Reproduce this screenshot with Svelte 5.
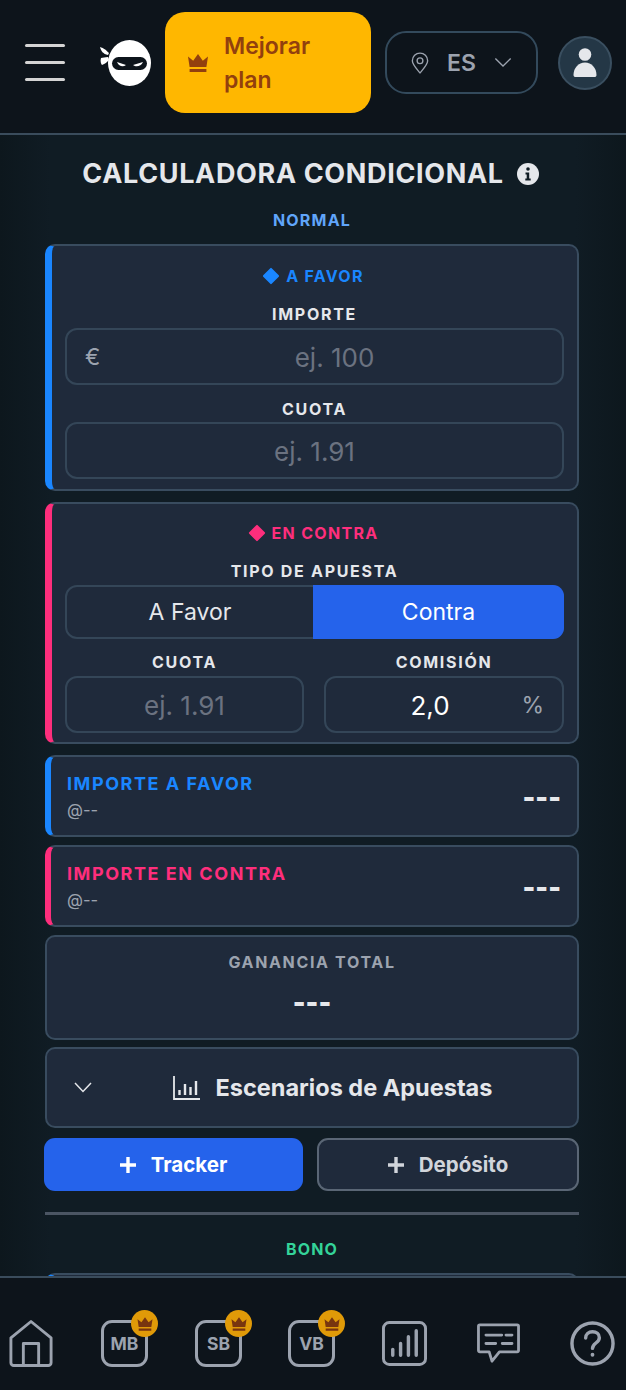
<script>
    const badges = ["MB", "SB", "VB"];
</script>

{#snippet crown(size)}
    <svg width={size} height={size} viewBox="0 0 24 24" fill="currentColor">
        <path d="M2 5.5l5.2 4.2L12 3l4.8 6.7L22 5.5 20.4 16H3.6z" />
        <rect x="3.6" y="18" width="16.8" height="3" />
    </svg>
{/snippet}

<div class="page">
    <!-- Header -->
    <header class="topbar">
        <button class="burger" aria-label="Menu">
            <span></span>
            <span></span>
            <span></span>
        </button>

        <svg class="logo" width="52" height="48" viewBox="0 0 52 48">
            <path d="M9 13C5 9 3 8 0 7c1 4 3 7 8 8z" fill="#fff" />
            <path d="M8 17c-3 0-5 1-7 1-1 3 0 6 1 7 3-1 5-3 7-5z" fill="#fff" />
            <ellipse cx="29.500" cy="23" rx="21.500" ry="23" fill="#fff" />
            <rect x="12" y="17" width="35" height="13" rx="6.500" fill="#0d141b" />
            <path d="M17 22l9 3c-3 2.500-7 1.500-9-3zM43 22l-10 3c3 2.500 8 1.500 10-3z" fill="#fff" />
        </svg>

        <button class="upgrade">
            <span class="upgrade-crown">{@render crown(24)}</span>
            <span>Mejorar<br />plan</span>
        </button>

        <button class="lang">
            <svg width="18" height="22" viewBox="0 0 20 24" fill="none" stroke="#9ca3af" stroke-width="1.500">
                <path d="M10 23C5 17 1.500 13.500 1.500 9.500a8.500 8.500 0 0 1 17 0C18.500 13.500 15 17 10 23z" />
                <circle cx="10" cy="9.500" r="3.200" />
            </svg>
            <span>ES</span>
            <svg width="18" height="11" viewBox="0 0 20 12" fill="none" stroke="#9ca3af" stroke-width="1.500">
                <path d="M1.500 1.500L10 10l8.500-8.500" />
            </svg>
        </button>

        <div class="avatar">
            <svg width="24" height="30" viewBox="0 0 24 30" fill="#e5e7eb">
                <circle cx="12" cy="6.500" r="6.300" />
                <path d="M.5 27c0-7 5-12.500 11.500-12.500S23.500 20 23.500 27c0 1.500-1 2-2 2h-19c-1 0-2-.5-2-2z" />
            </svg>
        </div>
    </header>

    <main class="content">
        <div class="title-row">
            <h1>CALCULADORA CONDICIONAL</h1>
            <svg width="22" height="22" viewBox="0 0 22 22">
                <circle cx="11" cy="11" r="11" fill="#e5e7eb" />
                <circle cx="11" cy="6" r="1.800" fill="#101c24" />
                <path d="M8.500 9.500h3.700v6h1.500v2H8.300v-2h1.400v-4H8.500z" fill="#101c24" />
            </svg>
        </div>
        <div class="mode mode-normal">NORMAL</div>

        <!-- A favor -->
        <section class="card accent-blue bet-one">
            <div class="bet-head blue"><i class="diamond"></i>A FAVOR</div>
            <div class="label">IMPORTE</div>
            <div class="field">
                <span class="prefix">€</span>
                <input placeholder="ej. 100" />
            </div>
            <div class="label second">CUOTA</div>
            <div class="field">
                <input placeholder="ej. 1.91" />
            </div>
        </section>

        <!-- En contra -->
        <section class="card accent-pink bet-two">
            <div class="bet-head pink"><i class="diamond"></i>EN CONTRA</div>
            <div class="label">TIPO DE APUESTA</div>
            <div class="toggle">
                <button>A Favor</button>
                <button class="active">Contra</button>
            </div>
            <div class="two-cols">
                <div>
                    <div class="label">CUOTA</div>
                    <div class="field">
                        <input placeholder="ej. 1.91" />
                    </div>
                </div>
                <div>
                    <div class="label">COMISIÓN</div>
                    <div class="field">
                        <input class="filled" value="2,0" />
                        <span class="suffix">%</span>
                    </div>
                </div>
            </div>
        </section>

        <!-- Resultados -->
        <section class="card result accent-blue thin">
            <div class="result-text">
                <div class="result-name blue">IMPORTE A FAVOR</div>
                <div class="result-odds">@--</div>
            </div>
            <div class="dashes">---</div>
        </section>
        <section class="card result accent-pink thin">
            <div class="result-text">
                <div class="result-name pink">IMPORTE EN CONTRA</div>
                <div class="result-odds">@--</div>
            </div>
            <div class="dashes">---</div>
        </section>
        <section class="card total">
            <div class="total-name">GANANCIA TOTAL</div>
            <div class="dashes">---</div>
        </section>

        <section class="card scenarios">
            <svg class="scenarios-chevron" width="18" height="11" viewBox="0 0 18 11" fill="none" stroke="#e5e7eb" stroke-width="1.500">
                <path d="M1 1l8 8.500L17 1" />
            </svg>
            <div class="scenarios-title">
                <svg width="27" height="24" viewBox="0 0 27 24" fill="none" stroke="#e5e7eb" stroke-width="1.800">
                    <path d="M1 0v23h26" />
                    <path d="M6.500 14v5M12 8v11M17.500 11v8M23 5v14" stroke-width="2.400" />
                </svg>
                <span>Escenarios de Apuestas</span>
            </div>
        </section>

        <div class="actions">
            <button class="primary">
                <svg width="16" height="16" viewBox="0 0 16 16" fill="currentColor"><path d="M6.300 0h3.400v6.300H16v3.400H9.700V16H6.300V9.700H0V6.300h6.300z" /></svg>
                Tracker
            </button>
            <button class="secondary">
                <svg width="16" height="16" viewBox="0 0 16 16" fill="currentColor"><path d="M6.300 0h3.400v6.300H16v3.400H9.700V16H6.300V9.700H0V6.300h6.300z" /></svg>
                Depósito
            </button>
        </div>

        <hr />
        <div class="mode mode-bono">BONO</div>
        <section class="card accent-blue bet-one"></section>
    </main>

    <!-- Bottom nav -->
    <nav class="bottom">
        <svg class="home" width="44" height="49" viewBox="0 0 46 50" fill="none" stroke="#9ca3af" stroke-width="3" stroke-linejoin="round">
            <path d="M2 19L23 2l21 17v26a3 3 0 0 1-3 3H5a3 3 0 0 1-3-3z" />
            <path d="M15 48V25h16v23" />
        </svg>

        {#each badges as badge}
            <div class="square">
                <span>{badge}</span>
                <div class="badge">{@render crown(18)}</div>
            </div>
        {/each}

        <svg width="45" height="45" viewBox="0 0 46 46" fill="none" stroke="#9ca3af" stroke-linecap="round">
            <rect x="1.500" y="1.500" width="43" height="43" rx="6" stroke-width="3" />
            <path d="M11 29v6M19 23v12M27 16v19M35 10v25" stroke-width="3.500" />
        </svg>

        <svg class="shifted" width="45" height="41" viewBox="0 0 46 44" fill="none" stroke="#9ca3af" stroke-width="3" stroke-linejoin="round">
            <path d="M3 2h40a1.500 1.500 0 0 1 1.500 1.500v26a1.500 1.500 0 0 1-1.500 1.500H24l-8 10-3-10H3a1.500 1.500 0 0 1-1.500-1.500v-26A1.500 1.500 0 0 1 3 2z" />
            <path d="M9.500 13h17M31 13h6.500M9.500 22h10.500M27 22h10.500" stroke-linecap="round" />
        </svg>

        <svg class="shifted" width="45" height="45" viewBox="0 0 46 46" fill="none" stroke="#9ca3af" stroke-width="3.500">
            <circle cx="23" cy="23" r="21" />
            <path d="M16 17.500c0-4 3-6.500 7-6.500s7 2.500 7 6c0 5.500-7 5.500-7 11" stroke-linecap="round" />
            <circle cx="23" cy="34.500" r="1.200" fill="#9ca3af" stroke-width="1.500" />
        </svg>
    </nav>
</div>

<style>
    :global(body) {
        margin: 0;
        background: #101c24;
    }

    .page {
        height: 1390px;
        display: flex;
        flex-direction: column;
        overflow: hidden;
        font-family: Inter, "Liberation Sans", sans-serif;
        color: #e5e7eb;
    }

    button {
        font-family: inherit;
        cursor: pointer;
    }

    /* Header */
    .topbar {
        height: 133px;
        flex: none;
        display: flex;
        align-items: center;
        box-sizing: content-box;
        background: #0d141b;
        border-bottom: 2px solid #3a4c5c;
    }
    .burger {
        width: 40px;
        height: 37px;
        margin-left: 25px;
        margin-top: -8px;
        padding: 0;
        display: flex;
        flex-direction: column;
        justify-content: space-between;
        background: none;
        border: 0;
    }
    .burger span {
        height: 3px;
        border-radius: 2px;
        background: #d4d4d4;
    }
    .logo {
        margin-left: 35px;
        margin-right: 13px;
        margin-top: -5px;
        flex: none;
    }
    .upgrade {
        width: 206px;
        height: 101px;
        margin-top: -8px;
        padding: 0 0 0 21px;
        display: flex;
        align-items: center;
        gap: 14px;
        flex: none;
        text-align: left;
        font-size: 23px;
        line-height: 34px;
        font-weight: 600;
        color: #92400e;
        background: #ffb700;
        border: 0;
        border-radius: 20px;
    }
    .upgrade-crown {
        display: flex;
    }
    .lang {
        width: 153px;
        height: 63px;
        margin-left: 14px;
        margin-top: -8px;
        padding: 0 24px;
        display: flex;
        align-items: center;
        justify-content: space-between;
        flex: none;
        font-size: 23px;
        font-weight: 600;
        color: #9ca3af;
        background: none;
        border: 2px solid #334a5c;
        border-radius: 21px;
    }
    .avatar {
        width: 54px;
        height: 54px;
        margin-left: 20px;
        margin-top: -8px;
        box-sizing: border-box;
        display: flex;
        align-items: center;
        justify-content: center;
        flex: none;
        background: #243746;
        border: 2px solid #3a4f60;
        border-radius: 50%;
    }

    /* Content */
    .content {
        flex: 1;
        min-height: 0;
        overflow: hidden;
        padding: 0 47px 0 45px;
        background: linear-gradient(90deg, #0d171d 0, #101c24 8%, #101c24 92%, #0d171d 100%);
    }
    .title-row {
        height: 75px;
        display: flex;
        align-items: center;
        justify-content: center;
        gap: 13px;
        padding: 2px 3px 0 0;
        box-sizing: border-box;
    }
    h1 {
        margin: 0;
        font-size: 27px;
        font-weight: 700;
        letter-spacing: 0.65px;
        white-space: nowrap;
    }
    .mode {
        text-align: center;
        font-size: 16px;
        line-height: 20px;
        font-weight: 700;
        letter-spacing: 1.2px;
        margin-bottom: 14px;
    }
    .mode-normal {
        color: #60a5fa;
    }
    .mode-bono {
        color: #34d399;
    }

    .card {
        box-sizing: border-box;
        background: #1f2a3b;
        border: 2px solid #394c5f;
        border-radius: 10px;
        margin-bottom: 11px;
    }
    .accent-blue {
        border-left: 7px solid #1a86ff;
    }
    .accent-pink {
        border-left: 7px solid #fe2e7c;
    }
    .thin {
        border-left-width: 6px;
    }
    .bet-one,
    .bet-two {
        padding: 0 13px;
    }
    .bet-one {
        height: 247px;
    }
    .bet-two {
        height: 242px;
    }
    .bet-head {
        height: 20px;
        margin-top: 20px;
        display: flex;
        align-items: center;
        justify-content: center;
        gap: 9px;
        font-size: 16px;
        font-weight: 700;
        letter-spacing: 1.3px;
    }
    .bet-two .bet-head {
        margin-top: 19px;
    }
    .blue {
        color: #1a86ff;
    }
    .pink {
        color: #fe2e7c;
    }
    .diamond {
        width: 12px;
        height: 12px;
        background: currentColor;
        transform: rotate(45deg);
        border-radius: 1px;
    }
    .label {
        margin-top: 18px;
        height: 20px;
        line-height: 20px;
        margin-bottom: 4px;
        text-align: center;
        font-size: 16px;
        font-weight: 700;
        letter-spacing: 1.7px;
        color: #e5e7eb;
    }
    .label.second {
        margin-top: 14px;
        margin-bottom: 3px;
    }
    .field {
        height: 57px;
        box-sizing: border-box;
        display: flex;
        align-items: center;
        position: relative;
        border: 2px solid #344658;
        border-radius: 12px;
    }
    .field input {
        flex: 1;
        width: 100%;
        min-width: 0;
        height: 100%;
        padding: 2px 0 0;
        box-sizing: border-box;
        text-align: center;
        font-family: inherit;
        font-size: 26px;
        color: #fff;
        background: none;
        border: 0;
        outline: 0;
    }
    .field input::placeholder {
        color: #6b7280;
        opacity: 1;
    }
    .prefix {
        width: 40px;
        flex: none;
        padding-left: 18px;
        box-sizing: border-box;
        font-size: 23px;
        color: #9ca3af;
    }
    .suffix {
        position: absolute;
        right: 18px;
        font-size: 23px;
        color: #9ca3af;
    }
    .field input.filled {
        padding-right: 28px;
    }

    .toggle {
        height: 54px;
        display: flex;
        box-sizing: border-box;
        border: 2px solid #344658;
        border-radius: 12px;
    }
    .toggle button {
        width: 246px;
        flex: none;
        margin: 0;
        padding: 0;
        font-size: 23px;
        color: #e5e7eb;
        background: none;
        border: 0;
    }
    .toggle .active {
        flex: 1;
        width: auto;
        margin: -2px -2px -2px 0;
        color: #fff;
        background: #2563eb;
        border-radius: 0 11px 11px 0;
    }
    .two-cols {
        display: grid;
        grid-template-columns: 239px 240px;
        gap: 20px;
        margin-top: 13px;
    }
    .two-cols .label {
        margin-top: 0;
    }

    .result {
        height: 82px;
        display: flex;
        align-items: center;
        justify-content: space-between;
        padding: 0 16px 0 16px;
        margin-bottom: 8px;
    }
    .result-text {
        padding-bottom: 1px;
    }
    .result-name {
        font-size: 18px;
        line-height: 24px;
        font-weight: 700;
        letter-spacing: 1.55px;
    }
    .result-odds {
        margin-top: 4px;
        font-size: 16.5px;
        line-height: 20px;
        color: #9ca3af;
    }
    .dashes {
        font-size: 27px;
        font-weight: 900;
        color: #e5e7eb;
    }
    .result .dashes {
        margin-top: 2px;
    }
    .total {
        height: 105px;
        padding-top: 14px;
        margin-bottom: 7px;
        text-align: center;
    }
    .total-name {
        font-size: 16px;
        line-height: 22px;
        font-weight: 700;
        letter-spacing: 1.65px;
        color: #9ca3af;
    }
    .total .dashes {
        margin-top: 13px;
    }

    .scenarios {
        height: 81px;
        margin-bottom: 10px;
        display: flex;
        align-items: center;
        padding-left: 27px;
    }
    .scenarios-title {
        flex: 1;
        display: flex;
        align-items: center;
        justify-content: center;
        gap: 16px;
        padding-right: 4px;
        font-size: 23.5px;
        font-weight: 700;
    }

    .actions {
        display: grid;
        grid-template-columns: 259px 262px;
        gap: 14px;
        margin-left: -1px;
    }
    .actions button {
        height: 53px;
        display: flex;
        align-items: center;
        justify-content: center;
        gap: 15px;
        font-size: 20.5px;
        font-weight: 700;
        border-radius: 11px;
    }
    .primary {
        color: #fff;
        background: #2563eb;
        border: 0;
    }
    .secondary {
        color: #d1d5db;
        background: #1f2a3b;
        border: 2px solid #5a6675;
    }
    hr {
        height: 3px;
        margin: 21px 0 24px;
        background: #4b5563;
        border: 0;
    }

    /* Bottom nav */
    .bottom {
        height: 114px;
        flex: none;
        display: flex;
        align-items: center;
        gap: 47px;
        padding: 19px 0 0 9px;
        background: #0d141b;
        border-top: 2px solid #3a4c5c;
        box-sizing: border-box;
    }
    .home {
        margin-right: 1px;
    }
    .shifted {
        margin-left: 2px;
    }
    .square {
        width: 47px;
        height: 47px;
        box-sizing: border-box;
        position: relative;
        display: flex;
        align-items: center;
        justify-content: center;
        font-size: 17.5px;
        font-weight: 700;
        color: #9ca3af;
        border: 3px solid #9ca3af;
        border-radius: 11px;
    }
    .square:nth-of-type(3) {
        margin-left: -1px;
    }
    .badge {
        width: 27px;
        height: 27px;
        position: absolute;
        top: -13px;
        right: -13px;
        display: flex;
        align-items: center;
        justify-content: center;
        color: #78350f;
        background: #e09a08;
        border-radius: 50%;
    }
</style>
